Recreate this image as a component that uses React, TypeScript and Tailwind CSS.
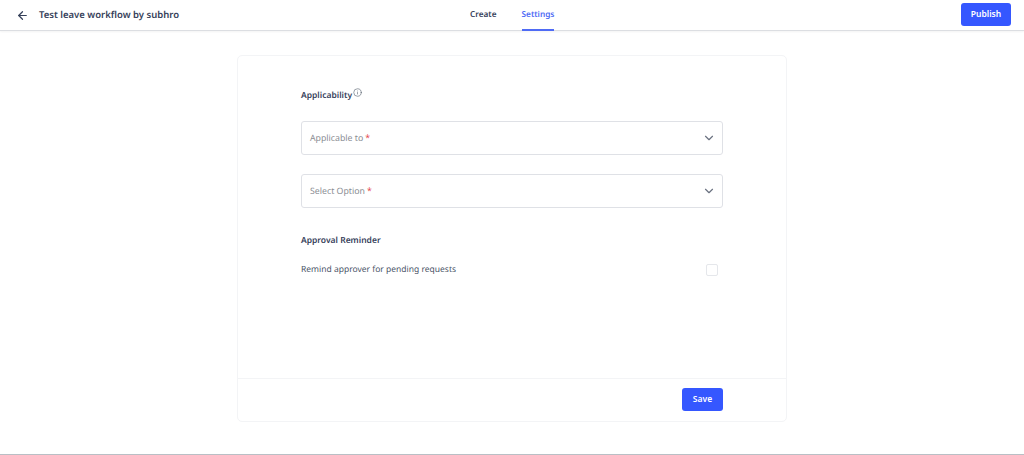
import { ArrowLeft, ChevronDown, Info } from "lucide-react";

const SelectField = ({ label }: { label: string }) => {
  return (
    <div className="h-[34px] border border-[#dfe1e6] rounded-[3px] pl-2 pr-2 flex items-center justify-between">
      <span className="pt-[2px] text-[8.75px] text-[#8a8d93]">
        {label}
        <span className="text-[#e5484d] ml-[2px]">*</span>
      </span>
      <ChevronDown size={14} strokeWidth={2} className="text-[#6b7280] mr-[-2px]" />
    </div>
  );
};

export default function App() {
  return (
    <div className="h-[455px] bg-white flex flex-col font-['Noto_Sans',sans-serif] [text-rendering:geometricPrecision] text-[#36415a] overflow-hidden">
      {/* Top bar */}
      <header className="relative h-[31px] shrink-0 border-b border-[#dcdee2] shadow-[0_1px_2px_rgba(0,0,0,0.05)] pl-4 pr-[13px] flex items-center justify-between">
        <div className="flex items-center gap-[10px]">
          <ArrowLeft size={13} strokeWidth={2.25} className="text-[#36415a]" />
          <span className="text-[9.5px] font-semibold">Test leave workflow by subhro</span>
        </div>

        <nav className="absolute top-0 left-[470px] h-[31px] flex gap-[25px] text-[8.25px] font-semibold">
          <span className="pt-[9px]">Create</span>
          <span className="pt-[9px] h-[31px] text-[#4f6bf5] border-b-2 border-[#4f6bf5]">Settings</span>
        </nav>

        <button className="w-[50px] h-[23px] bg-[#3557ff] rounded-[3px] text-white text-[8.5px] font-semibold mb-[2px]">
          Publish
        </button>
      </header>

      {/* Card */}
      <main className="flex-1 flex justify-center items-start pt-6">
        <div className="w-[550px] h-[367px] border border-[#f3f4f6] rounded-[5px] flex flex-col">
          <div className="flex-1 pl-[63px] pr-[63px] pt-[32px]">
            <div className="flex items-start gap-[1px] h-[14px] text-[8.5px] font-semibold">
              <span className="leading-[16px]">Applicability</span>
              <Info size={9} strokeWidth={1.5} className="text-[#4b5563]" />
            </div>

            <div className="mt-[19px] flex flex-col gap-[19px]">
              <SelectField label="Applicable to" />
              <SelectField label="Select Option" />
            </div>

            <p className="mt-[26px] text-[8.5px] font-semibold leading-[14px]">Approval Reminder</p>

            <div className="mt-[15px] flex items-center justify-between pr-[5px]">
              <span className="text-[8.5px] leading-[14px] text-[#4a5468]">Remind approver for pending requests</span>
              <div className="w-3 h-3 border border-[#e5e7eb] rounded-[2px]" />
            </div>
          </div>

          <div className="h-[43px] shrink-0 border-t border-[#f3f4f6] pr-[63px] pb-[2px] flex items-center justify-end">
            <button className="w-[41px] h-[23px] bg-[#3557ff] rounded-[3px] text-white text-[8.5px] font-semibold">
              Save
            </button>
          </div>
        </div>
      </main>

      <div className="h-px shrink-0 bg-[#b9bfc5]" />
    </div>
  );
}
